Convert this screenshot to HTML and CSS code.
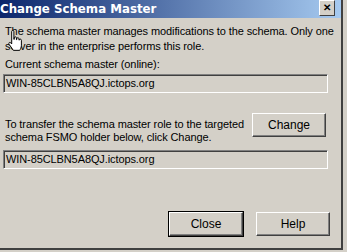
FILE: index.html
```html
<!DOCTYPE html>
<html lang="en">
<head>
  <meta charset="UTF-8">
  <title>Change Schema Master</title>
  <link rel="stylesheet" href="styles.css">
</head>
<body>
  <div class="window">
    <div class="titlebar">
      <span class="title">Change Schema Master</span>
      <span class="close-x">&#x2715;</span>
    </div>
    <div class="content">
      <p class="intro">The schema master manages modifications to the schema. Only one<br>server in the enterprise performs this role.</p>
      <div class="label">Current schema master (online):</div>
      <div class="field">WIN-85CLBN5A8QJ.ictops.org</div>

      <div class="transfer">
        <p>To transfer the schema master role to the targeted<br>schema FSMO holder below, click Change.</p>
        <button class="btn">Change</button>
      </div>
      <div class="field">WIN-85CLBN5A8QJ.ictops.org</div>

      <div class="actions">
        <button class="btn default">Close</button>
        <button class="btn">Help</button>
      </div>
    </div>

    <svg class="cursor" width="16" height="22" viewBox="0 0 14 20">
      <path d="M4 1.5c0-.8.5-1.2 1-1.2s1 .4 1 1.2v7h.3V7.2c0-.7.5-1 1-1s1 .3 1 1v1.6h.3V8c0-.7.5-1 1-1s1 .3 1 1v1.2h.3c0-.6.4-.9.9-.9s1 .3 1 1V14c0 2-1 3.5-1.5 4.5H5.5L2 13.5c-.6-.8-.8-1.5-.3-2 .5-.4 1.2-.2 1.7.4L4 12.7V1.5z" fill="#fff" stroke="#000" stroke-width="0.9"/>
    </svg>
  </div>
</body>
</html>
```

FILE: styles.css
```css
body {
  margin: 0;
  background: #d4d0c8;
  font-family: "Liberation Sans", Arial, sans-serif;
  font-size: 11px;
  letter-spacing: -0.1px;
  color: #000;
  overflow: hidden;
}
.window {
  position: relative;
  width: 344px;
  height: 248px;
  margin-left: -3px;
  border-right: 2px solid #404040;
  border-bottom: 2px solid #404040;
  background: #d4d0c8;
}
.titlebar {
  height: 18px;
  display: flex;
  align-items: center;
  justify-content: space-between;
  background: linear-gradient(to right, #0a246a, #a6caf0);
  padding: 0 6px 0 3px;
}
.title {
  color: #fff;
  font-family: "DejaVu Sans", sans-serif;
  font-weight: bold;
  font-size: 11.8px;
  letter-spacing: 0;
}
.close-x {
  width: 14px;
  height: 14px;
  margin-top: -3px;
  background: #d4d0c8;
  border: 1px solid;
  border-color: #fff #404040 #404040 #fff;
  font-size: 10px;
  font-weight: bold;
  line-height: 14px;
  text-align: center;
}
.content {
  padding: 6px 13px 0 8px;
}
.intro {
  margin: 0;
  line-height: 15px;
  white-space: nowrap;
}
.label {
  margin-top: 3px;
  line-height: 14px;
}
.field {
  height: 17px;
  line-height: 17px;
  margin-left: -2px;
  padding-left: 2px;
  border: 1px solid;
  border-color: #808080 #fff #fff #808080;
  box-shadow: inset 1px 1px 0 #404040;
  margin-top: 3px;
}
.transfer {
  display: flex;
  justify-content: space-between;
  align-items: flex-start;
  margin-top: 25px;
}
.transfer p {
  margin: 0;
  line-height: 13px;
  white-space: nowrap;
}
.btn {
  font-family: "Liberation Sans", Arial, sans-serif;
  font-size: 12px;
  letter-spacing: 0;
  width: 74px;
  height: 24px;
  background: #d4d0c8;
  border: 1px solid;
  border-color: #fff #404040 #404040 #fff;
  box-shadow: inset -1px -1px 0 #808080;
  padding: 0;
  color: #000;
}
.transfer .btn {
  margin-top: -5px;
  margin-right: 2px;
}
.transfer + .field {
  margin-top: 6px;
}
.actions {
  display: flex;
  justify-content: flex-end;
  gap: 13px;
  margin-top: 43px;
  margin-right: -2px;
}
.btn.default {
  outline: 1px solid #000;
}
.cursor {
  position: absolute;
  left: 10px;
  top: 30px;
}
```
